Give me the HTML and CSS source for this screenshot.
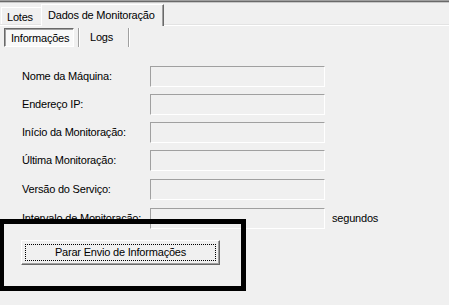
FILE: index.html
```html
<!DOCTYPE html>
<html lang="pt">
<head>
    <meta charset="UTF-8">
    <title>Dados de Monitoração</title>
    <link rel="stylesheet" href="styles.css">
</head>
<body>
    <div class="window">
        <div class="tabs">
            <div class="tab">Lotes</div>
            <div class="tab tab-active">Dados de Monitoração</div>
        </div>
        <div class="panel">
            <div class="subtabs">
                <div class="subtab subtab-active">Informações</div>
                <div class="sep"></div>
                <div class="subtab subtab-logs">Logs</div>
                <div class="sep"></div>
            </div>
            <div class="form">
                <div class="row"><label>Nome da Máquina:</label><div class="field"></div></div>
                <div class="row"><label>Endereço IP:</label><div class="field"></div></div>
                <div class="row"><label>Início da Monitoração:</label><div class="field"></div></div>
                <div class="row"><label>Última Monitoração:</label><div class="field"></div></div>
                <div class="row row-wide"><label>Versão do Serviço:</label><div class="field"></div></div>
                <div class="row row-wide"><label>Intervalo de Monitoração:</label><div class="field"></div><span class="unit">segundos</span></div>
            </div>
            <button class="btn"><span class="btn-focus">Parar Envio de Informações</span></button>
        </div>
    </div>
    <div class="highlight"></div>
</body>
</html>
```

FILE: styles.css
```css
html,body{margin:0;padding:0;height:100%;overflow:hidden;}
body{
    background:#f0f0f0;
    font-family:"Liberation Sans",Arial,sans-serif;
    font-size:11px;
    line-height:13px;
    letter-spacing:-0.2px;
    color:#000;
    position:relative;
}
.window{
    border-top:1px solid #a0a0a0;
    box-shadow:inset 0 1px 0 #696969,inset 0 2px 0 #c8c8c8;
    padding-top:2px;
}
.tabs{display:flex;align-items:flex-end;height:21px;padding-left:1px;}
.tab{
    box-sizing:border-box;
    height:17px;
    width:40px;
    padding-left:5px;
    padding-top:3px;
    border-top:1px solid #fff;
    border-left:1px solid #fff;
}
.tab-active{
    width:123px;
    height:22px;
    padding-left:6px;
    padding-top:4px;
    border-right:1px solid #696969;
    box-shadow:inset -1px 0 0 #a0a0a0;
    position:relative;
    z-index:1;
    background:#f0f0f0;
    margin-bottom:-2px;
}
.panel{
    border-top:1px solid #e3e3e3;
    box-shadow:inset 0 1px 0 #fff;
    padding-top:3px;
}
.subtabs{display:flex;align-items:center;height:19px;padding-left:4px;}
.subtab{box-sizing:border-box;height:19px;padding-top:3px;}
.subtab-active{
    width:70px;
    padding-left:6px;
    background:#f9f9f9;
    border-top:1px solid #696969;
    border-left:1px solid #696969;
    border-right:1px solid #fff;
    border-bottom:1px solid #fff;
    box-shadow:inset 1px 1px 0 #a0a0a0;
}
.subtab-logs{width:48px;padding-left:10px;}
.sep{height:19px;width:0;border-left:1px solid #a0a0a0;border-right:1px solid #fff;margin-left:4px;}
.subtab-logs + .sep{margin-left:0;}
.form{display:flex;flex-direction:column;gap:7px;padding-top:19px;padding-left:22px;}
.row{display:flex;align-items:center;height:21px;}
.row-wide{margin-top:1px;}
.row label{width:128px;}
.field{
    box-sizing:border-box;
    width:175px;
    height:21px;
    border-top:1px solid #a0a0a0;
    border-left:1px solid #a0a0a0;
    border-right:1px solid #fff;
    border-bottom:1px solid #fff;
}
.unit{margin-left:7px;}
.btn{
    display:block;
    margin:11px 0 0 21px;
    box-sizing:border-box;
    width:199px;
    height:25px;
    padding:3px;
    background:#f0f0f0;
    font:inherit;
    letter-spacing:inherit;
    border-top:1px solid #fff;
    border-left:1px solid #fff;
    border-right:1px solid #696969;
    border-bottom:1px solid #696969;
    box-shadow:inset -1px -1px 0 #a0a0a0;
}
.btn-focus{
    display:block;
    height:17px;
    line-height:16px;
    outline:1px dotted #000;
    outline-offset:-1px;
    text-align:center;
}
.highlight{
    position:absolute;
    left:-1px;
    top:219px;
    width:247px;
    height:72px;
    box-sizing:border-box;
    border:5px solid #000;
}
```
